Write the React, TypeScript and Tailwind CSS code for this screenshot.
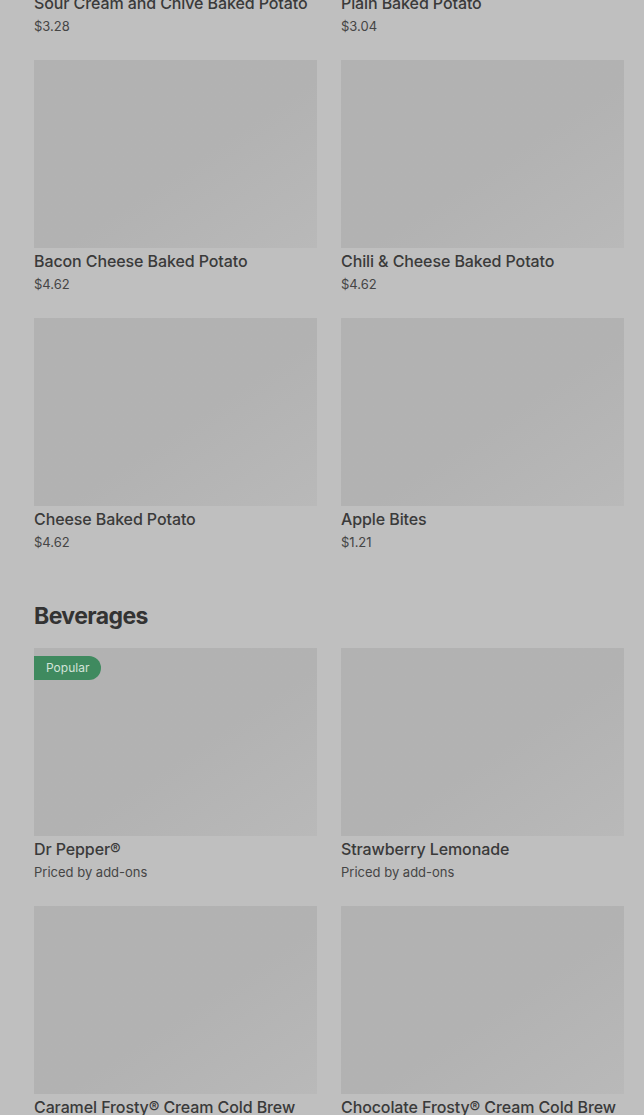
import React from 'react';

type Item = { name: string; price: string; popular?: boolean };

const food: Item[] = [
  { name: 'Sour Cream and Chive Baked Potato', price: '$3.28' },
  { name: 'Plain Baked Potato', price: '$3.04' },
  { name: 'Bacon Cheese Baked Potato', price: '$4.62' },
  { name: 'Chili & Cheese Baked Potato', price: '$4.62' },
  { name: 'Cheese Baked Potato', price: '$4.62' },
  { name: 'Apple Bites', price: '$1.21' },
];

const beverages: Item[] = [
  { name: 'Dr Pepper®', price: 'Priced by add-ons', popular: true },
  { name: 'Strawberry Lemonade', price: 'Priced by add-ons' },
  { name: 'Caramel Frosty® Cream Cold Brew', price: 'Priced by add-ons' },
  { name: 'Chocolate Frosty® Cream Cold Brew', price: 'Priced by add-ons' },
];

function MenuCard({ item }: { item: Item }) {
  return (
    <div className="flex flex-col">
      <div className="relative h-[188px] bg-linear-to-br from-[#b2b2b2] from-55% to-[#b9b9b9]">
        {item.popular && (
          <span className="absolute left-0 top-2 rounded-r-full bg-[#3f8a5f] px-3 text-[12px] leading-6 text-[#d3e3d9]">
            Popular
          </span>
        )}
      </div>
      <p className="mt-[2px] whitespace-nowrap text-[16px] font-medium leading-[22px] tracking-[-0.1px] text-[#3a3a3a]">
        {item.name}
      </p>
      <p className="mt-[3px] text-[13px] leading-[18px] text-[#454545]">{item.price}</p>
    </div>
  );
}

export default function App() {
  return (
    <div
      className="h-[1115px] overflow-hidden bg-[#bfbfbf]"
      style={{ fontFamily: 'Inter, "Noto Sans", sans-serif' }}
    >
      <div className="-mt-[198px] pl-[34px] pr-[20px]">
        <div className="grid grid-cols-2 gap-x-6 gap-y-[25px]">
          {food.map((item) => (
            <MenuCard key={item.name} item={item} />
          ))}
        </div>

        <h2 className="mt-[49px] text-[23px] font-bold leading-8 tracking-tight text-[#333333]">
          Beverages
        </h2>

        <div className="mt-4 grid grid-cols-2 gap-x-6 gap-y-[25px]">
          {beverages.map((item) => (
            <MenuCard key={item.name} item={item} />
          ))}
        </div>
      </div>
    </div>
  );
}
